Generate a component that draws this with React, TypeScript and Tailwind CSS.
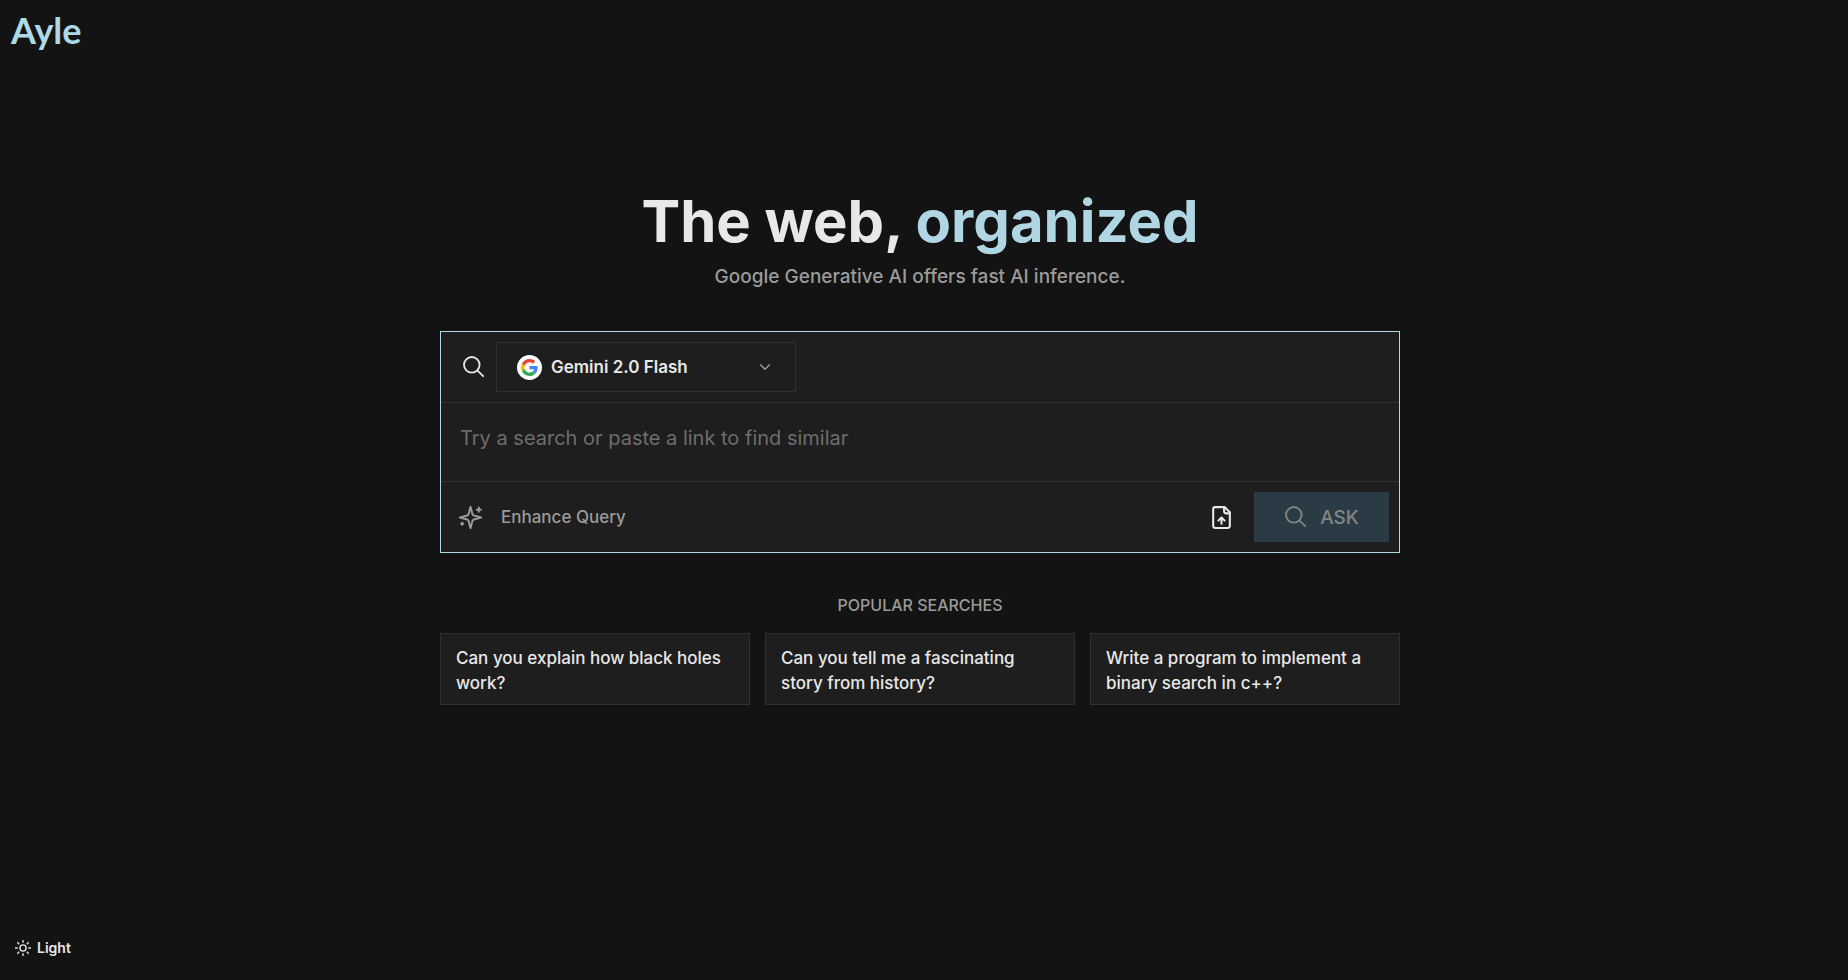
import { ChevronDown } from "lucide-react";

const suggestions = [
  "Can you explain how black holes work?",
  "Can you tell me a fascinating story from history?",
  "Write a program to implement a binary search in c++?",
];

function SearchIcon({ className }: { className: string }) {
  return (
    <svg viewBox="0 0 24 24" fill="none" stroke="currentColor" strokeWidth="1.8" className={className} aria-hidden="true">
      <circle cx="9.8" cy="9.8" r="7.8" />
      <path d="m15.3 15.3 6.4 6.4" />
    </svg>
  );
}

function SparklesIcon() {
  return (
    <svg viewBox="0 0 24 24" fill="none" stroke="currentColor" strokeWidth="1.9" strokeLinecap="round" strokeLinejoin="round" className="size-[25px]" aria-hidden="true">
      <path d="m12 1.8-1.912 7.013a2 2 0 0 1-1.275 1.275L1.8 12l7.013 1.912a2 2 0 0 1 1.275 1.275L12 22.2l1.912-7.013a2 2 0 0 1 1.275-1.275L22.2 12l-7.013-1.912a2 2 0 0 1-1.275-1.275L12 1.8Z" />
      <path d="M20 2.5v4M18 4.5h4M4 17v2M3 18h2" />
    </svg>
  );
}

function FileUploadIcon() {
  return (
    <svg viewBox="0 0 24 24" fill="none" stroke="currentColor" strokeWidth="2" strokeLinecap="round" strokeLinejoin="round" className="size-[25px]" aria-hidden="true">
      <path d="M15 2H6a2 2 0 0 0-2 2v16a2 2 0 0 0 2 2h12a2 2 0 0 0 2-2V7z" />
      <path d="M14.5 2v4a2 2 0 0 0 2 2H20M12 12v6M15 15l-3-3-3 3" />
    </svg>
  );
}

function SunIcon() {
  return (
    <svg viewBox="0 0 24 24" fill="none" stroke="currentColor" strokeWidth="2" className="size-4" aria-hidden="true">
      <circle cx="12" cy="12" r="4.6" />
      <path d="M12 0v4M12 20v4M0 12h4M20 12h4M3.5 3.5l2.8 2.8M17.7 17.7l2.8 2.8M3.5 20.5l2.8-2.8M17.7 6.3l2.8-2.8" />
    </svg>
  );
}

function GoogleLogo() {
  return (
    <span className="flex size-[25px] shrink-0 items-center justify-center rounded-full bg-white">
      <svg viewBox="0 0 48 48" className="size-[17px]" aria-hidden="true">
        <path fill="#EA4335" d="M24 9.5c3.54 0 6.71 1.22 9.21 3.6l6.85-6.85C35.9 2.38 30.47 0 24 0 14.62 0 6.51 5.38 2.56 13.22l7.98 6.19C12.43 13.72 17.74 9.5 24 9.5z" />
        <path fill="#4285F4" d="M46.98 24.55c0-1.57-.15-3.09-.38-4.55H24v9.02h12.94c-.58 2.96-2.26 5.48-4.78 7.18l7.73 6c4.51-4.18 7.09-10.36 7.09-17.65z" />
        <path fill="#FBBC05" d="M10.53 28.59c-.48-1.45-.76-2.99-.76-4.59s.27-3.14.76-4.59l-7.98-6.19C.92 16.46 0 20.12 0 24c0 3.88.92 7.54 2.56 10.78l7.97-6.19z" />
        <path fill="#34A853" d="M24 48c6.48 0 11.93-2.13 15.89-5.81l-7.73-6c-2.15 1.45-4.92 2.3-8.16 2.3-6.26 0-11.57-4.22-13.47-9.91l-7.98 6.19C6.51 42.62 14.62 48 24 48z" />
      </svg>
    </span>
  );
}

export default function App() {
  return (
    <div className="flex min-h-screen flex-col bg-[#131313] pr-2 font-['Inter',sans-serif] text-[#e8e8e8]">
      <header className="flex h-[60px] items-center px-[11px]">
        <a href="#" className="font-['Lato',sans-serif] text-[36px] leading-[60px] font-bold text-[#add8e6]">
          Ayle
        </a>
      </header>

      <main className="mx-auto w-full max-w-[960px] flex-1 pt-[121px]">
        <h1 className="text-center text-[58px] leading-[80px] font-bold">
          The web, <span className="text-[#b0d5e3]">organized</span>
        </h1>
        <p className="text-center text-[19px] leading-[32px] font-medium text-[#9b9b9b]">
          Google Generative AI offers fast AI inference.
        </p>

        <form className="mt-[38px] border border-[#add8e6] bg-[#1e1e1e]" onSubmit={(e) => e.preventDefault()}>
          <div className="flex items-center border-b border-[#303030] py-[10px] pl-[21px]">
            <SearchIcon className="size-[24px]" />
            <button
              type="button"
              className="ml-[10px] flex h-[50px] w-[300px] items-center border border-[#303030] pl-5 pr-[21px] text-[17px] font-semibold"
            >
              <GoogleLogo />
              <span className="ml-[9px] pt-[2px]">Gemini 2.0 Flash</span>
              <ChevronDown className="ml-auto size-[18px] text-[#9b9b9b]" strokeWidth={1.8} />
            </button>
          </div>
          <div className="flex border-b border-[#303030]">
            <textarea
              aria-label="Search query"
              rows={1}
              placeholder="Try a search or paste a link to find similar"
              className="h-[78px] w-full resize-none px-[19px] pt-[20px] text-[20px] leading-[30px] outline-none placeholder:text-[#6d6d6d]"
            />
          </div>
          <div className="flex items-center p-[10px]">
            <button type="button" className="flex items-center gap-[18px] pl-[7px] text-[17px] font-medium text-[#9b9b9b]">
              <SparklesIcon />
              <span className="pt-[2px]">Enhance Query</span>
            </button>
            <button type="button" aria-label="Upload file" className="ml-auto">
              <FileUploadIcon />
            </button>
            <button
              type="submit"
              className="ml-5 flex h-[50px] w-[135px] items-center justify-center gap-[12px] bg-[#2b3b45] text-[19px] font-medium text-[#838585]"
            >
              <SearchIcon className="size-[24px]" />
              <span className="pt-[2px]">ASK</span>
            </button>
          </div>
        </form>

        <section className="mt-10">
          <h2 className="text-center text-[16px] leading-[25px] font-medium text-[#9b9b9b]">POPULAR SEARCHES</h2>
          <div className="mt-[15px] grid grid-cols-3 gap-[15px]">
            {suggestions.map((text) => (
              <button
                key={text}
                type="button"
                className="border border-[#303030] bg-[#1e1e1e] px-[15px] pt-[12px] pb-[8px] text-left text-[17px] leading-[25px] font-medium"
              >
                {text}
              </button>
            ))}
          </div>
        </section>
      </main>

      <footer className="px-[15px] pb-[22px]">
        <button type="button" className="flex items-center gap-[6px] text-[14px] leading-5 font-semibold">
          <SunIcon />
          Light
        </button>
      </footer>
    </div>
  );
}
